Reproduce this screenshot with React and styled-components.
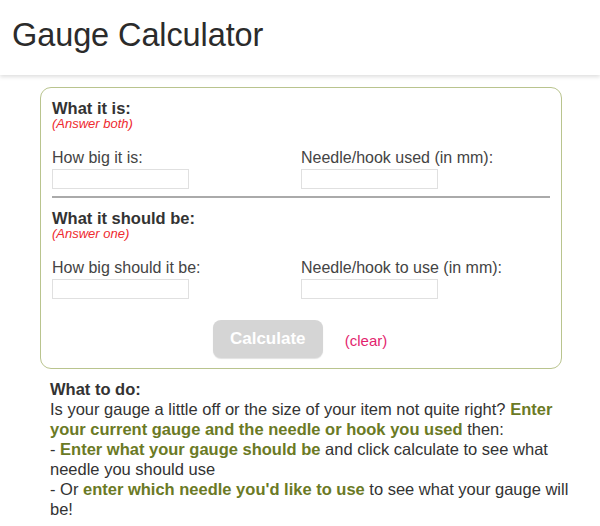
import React from "react";
import styled, { createGlobalStyle } from "styled-components";

const Global = createGlobalStyle`
  html, body { margin: 0; padding: 0; background: #fff; }
  body { font-family: "Liberation Sans", Arial, sans-serif; color: #333; }
  * { box-sizing: border-box; }
`;

const Header = styled.header`
  height: 75px;
  display: flex;
  align-items: center;
  padding: 0 0 4px 12px;
  background: #fff;
  box-shadow: 0 2px 4px rgba(0, 0, 0, 0.13);
  position: relative;
`;

const Title = styled.h1`
  margin: 0;
  font-size: 32.5px;
  font-weight: 300;
  color: #2b2b2b;
  letter-spacing: -0.1px;
`;

const Main = styled.main`
  padding: 12px 38px 0 40px;
`;

const Card = styled.section`
  border: 1.5px solid #b9c48e;
  border-radius: 11px;
  padding: 12px 11px 10px 11px;
`;

const SectionTitle = styled.h2`
  margin: 0;
  font-size: 16.5px;
  line-height: 17px;
  font-weight: 700;
  color: #333;
`;

const Note = styled.div`
  font-size: 13px;
  line-height: 13px;
  font-style: italic;
  color: #ee2a2f;
`;

const Fields = styled.div`
  display: grid;
  grid-template-columns: 1fr 1fr;
  margin-top: ${(p) => p.$top}px;
`;

const Field = styled.label`
  display: flex;
  flex-direction: column;
  align-items: flex-start;
`;

const Label = styled.span`
  font-size: 16px;
  line-height: 19px;
  color: #444;
`;

const Input = styled.input`
  width: 137px;
  height: 20px;
  margin-top: 2px;
  border: 1px solid #e0e0e0;
  background: #fff;
  padding: 0 3px;
  font: inherit;
`;

const Divider = styled.hr`
  border: 0;
  height: 2px;
  background: #aaa;
  margin: 7px 0 12px 0;
`;

const Actions = styled.div`
  display: flex;
  justify-content: center;
  align-items: center;
  gap: 22px;
  margin-top: 21px;
  padding-right: 2px;
`;

const Button = styled.button`
  width: 110px;
  height: 38px;
  border: 0;
  border-radius: 8px;
  background: #d5d5d5;
  box-shadow: 0 1px 1px rgba(0, 0, 0, 0.12);
  color: #fff;
  font-family: inherit;
  font-size: 17px;
  font-weight: 700;
`;

const Clear = styled.a`
  font-size: 15px;
  color: #e31f6e;
  text-decoration: none;
  margin-top: 2px;
`;

const Help = styled.div`
  padding: 11px 0 0 10px;
  width: 530px;
`;

const HelpTitle = styled.h3`
  margin: 0;
  font-size: 16.5px;
  line-height: 19px;
  font-weight: 700;
  color: #333;
`;

const HelpText = styled.p`
  margin: 0;
  font-size: 16.5px;
  line-height: 20px;
  color: #333;
`;

const Em = styled.strong`
  color: #6b7a25;
`;

export default function App() {
  return (
    <>
      <Global />
      <Header>
        <Title>Gauge Calculator</Title>
      </Header>
      <Main>
        <Card>
          <SectionTitle>What it is:</SectionTitle>
          <Note>(Answer both)</Note>
          <Fields $top={18}>
            <Field>
              <Label>How big it is:</Label>
              <Input type="text" />
            </Field>
            <Field>
              <Label>Needle/hook used (in mm):</Label>
              <Input type="text" />
            </Field>
          </Fields>
          <Divider />
          <SectionTitle>What it should be:</SectionTitle>
          <Note>(Answer one)</Note>
          <Fields $top={18}>
            <Field>
              <Label>How big should it be:</Label>
              <Input type="text" />
            </Field>
            <Field>
              <Label>Needle/hook to use (in mm):</Label>
              <Input type="text" />
            </Field>
          </Fields>
          <Actions>
            <Button type="button">Calculate</Button>
            <Clear href="#">(clear)</Clear>
          </Actions>
        </Card>
        <Help>
          <HelpTitle>What to do:</HelpTitle>
          <HelpText>
            Is your gauge a little off or the size of your item not quite right?{" "}
            <Em>Enter your current gauge and the needle or hook you used</Em> then:
            <br />- <Em>Enter what your gauge should be</Em> and click calculate to see what
            needle you should use
            <br />- Or <Em>enter which needle you'd like to use</Em> to see what your gauge will
            be!
          </HelpText>
        </Help>
      </Main>
    </>
  );
}
